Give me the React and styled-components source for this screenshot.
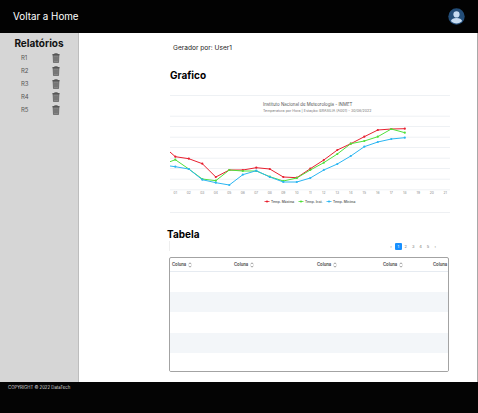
import React from 'react'
import styled, { createGlobalStyle } from 'styled-components'

const GlobalStyle = createGlobalStyle`
  html, body { margin: 0; padding: 0; background: #fff; }
  body { font-family: Inter, "Liberation Sans", sans-serif; color: #000; }
`

const Page = styled.div`
  width: 478px;
  height: 413px;
  display: flex;
  flex-direction: column;
  overflow: hidden;
`

const Header = styled.header`
  flex: 0 0 33px;
  background: #020202;
  color: #fff;
  display: flex;
  align-items: center;
  justify-content: space-between;
  padding: 0 13px;
  font-size: 9.8px;
`

const Body = styled.div`
  flex: 1;
  display: flex;
  min-height: 0;
`

const Sidebar = styled.aside`
  width: 79px;
  box-sizing: border-box;
  background: #d6d6d6;
  border-right: 1px solid #bdbdbd;
  padding-top: 4px;
`

const SideTitle = styled.h2`
  margin: 0 0 1px;
  font-size: 10px;
  line-height: 13px;
  font-weight: 700;
  text-align: center;
  color: #111;
`

const ReportRow = styled.div`
  display: flex;
  align-items: center;
  height: 13px;
  padding-left: 21px;
  font-size: 6px;
  color: #555;
`

const ReportName = styled.span`
  width: 31px;
`

const Main = styled.main`
  flex: 1;
  border-right: 1px solid #a8a8a8;
  display: flex;
  flex-direction: column;
  padding: 10px 0 0 91px;
`

const Author = styled.div`
  font-size: 6.6px;
  line-height: 10px;
  color: #222;
  padding-left: 3px;
`

const SectionTitle = styled.h3`
  margin: ${p => p.$top}px 0 0 ${p => p.$left}px;
  font-size: 10px;
  line-height: 14px;
  font-weight: 700;
  color: #000;
`

const ChartWrap = styled.div`
  margin-top: 13px;
  width: 280px;
  height: 118px;
`

const PagerRow = styled.div`
  display: flex;
  align-items: center;
  justify-content: flex-end;
  width: 280px;
  height: 10px;
  margin-left: -1px;
  box-sizing: border-box;
  padding-right: 10px;
  border-left: 1px solid #eee;
`

const PageItem = styled.span`
  width: 7.4px;
  height: 7px;
  border-radius: 1px;
  display: flex;
  align-items: center;
  justify-content: center;
  font-size: 4px;
  color: ${p => (p.$active ? '#fff' : '#777')};
  background: ${p => (p.$active ? '#1890ff' : 'transparent')};
`

const Table = styled.div`
  margin-top: 6px;
  margin-left: -1px;
  width: 280px;
  height: 115px;
  box-sizing: border-box;
  border: 1px solid #a3a3a3;
  border-radius: 2px;
  overflow: hidden;
`

const HeadRow = styled.div`
  display: grid;
  grid-template-columns: 62px 83px 66px 50px 1fr;
  height: 13px;
  align-items: center;
  padding-left: 2px;
  border-bottom: 1px solid #e6ebf1;
  font-size: 4.2px;
  font-weight: 600;
  color: #444;
`

const HeadCell = styled.div`
  display: flex;
  align-items: center;
  gap: 2px;
  white-space: nowrap;
`

const Row = styled.div`
  height: 20.2px;
  background: ${p => (p.$striped ? '#f3f6f9' : '#fff')};
`

const Footer = styled.footer`
  flex: 0 0 31px;
  box-sizing: border-box;
  background: #040404;
  color: #ddd;
  font-size: 4.3px;
  line-height: 6px;
  padding: 3px 0 0 8px;
`

const TrashIcon = () => (
  <svg width="8" height="10" viewBox="0 0 8 10">
    <path d="M2.700 1.200V.5h2.600v.7" fill="none" stroke="#444" strokeWidth=".6" />
    <rect x=".4" y="1.200" width="7.200" height="1.100" fill="#3c3c3c" />
    <path d="M1.100 2.300h5.800L6.500 9.600H1.500z" fill="#8a8a8a" stroke="#444" strokeWidth=".6" />
    <path d="M2.800 3.600v4.600M4 3.600v4.600M5.200 3.600v4.600" stroke="#555" strokeWidth=".5" />
  </svg>
)

const UserIcon = () => (
  <svg width="17" height="17" viewBox="0 0 17 17">
    <circle cx="8.500" cy="8.500" r="8.200" fill="#234d78" />
    <circle cx="8.500" cy="6.400" r="3.100" fill="#c7dcf2" />
    <path d="M2.900 13.100c.5-2.300 2.800-3.100 5.600-3.100s5.100.8 5.600 3.100c-1.300 1.500-3.400 2.500-5.600 2.500s-4.300-1-5.600-2.500z" fill="#c7dcf2" />
  </svg>
)

const SortIcon = () => (
  <svg width="4" height="6" viewBox="0 0 4 6">
    <path d="M.6 2.300 2 .8l1.400 1.500M.6 3.700 2 5.200l1.400-1.500" fill="none" stroke="#666" strokeWidth=".6" />
  </svg>
)

// chart values are in page pixels, offset by the chart's origin (170, 95)
const days = ['01', '02', '03', '04', '05', '06', '07', '08', '09', '10', '11', '12', '13', '14', '15', '16', '17', '18', '19', '20', '21']
const dayX = i => 5.3 + i * 13.5
const gridY = [0, 20.7, 31, 41.7, 52, 62.7, 73, 83.7, 94.3]

const series = [
  {
    name: 'Temp. Máxima',
    color: '#e8202f',
    values: [156.7, 158.7, 163.7, 177, 170, 170, 167.7, 169, 177, 177.7, 168.7, 160, 150, 143.7, 136.7, 130, 129, 128.7],
    start: 152,
    legendX: 94.5,
  },
  {
    name: 'Temp. Inst.',
    color: '#4fe03a',
    values: [159.7, 169, 179, 180.7, 170, 171, 171, 176.7, 181, 178, 170, 162.7, 154, 143.7, 141, 136.7, 129, 132.7],
    start: 161.7,
    legendX: 128.5,
  },
  {
    name: 'Temp. Mínima',
    color: '#2bb6f2',
    values: [166.7, 169, 179.7, 182.7, 185, 174.7, 170.7, 177, 182, 182, 178, 170, 164, 156, 146.7, 142, 139, 137.7],
    start: 166,
    legendX: 156.5,
  },
]

const Chart = () => (
  <svg width="280" height="118" viewBox="0 0 280 118" fontFamily="Inter, 'Liberation Sans', sans-serif">
    {gridY.map(y => (
      <line key={y} x1="0" x2="280" y1={y + 0.5} y2={y + 0.5} stroke="#eef1f4" strokeWidth="1" />
    ))}
    <line x1="0" x2="280" y1="117.5" y2="117.5" stroke="#eef0f3" />
    <text x="93" y="11" fontSize="4.4" fill="#555">Instituto Nacional de Meteorologia - INMET</text>
    <text x="93" y="16.500" fontSize="3.6" fill="#777">Temperatura por Hora | Estação: BRASILIA (A001) - 30/06/2022</text>
    {series.map(s => (
      <g key={s.name}>
        <polyline
          fill="none"
          stroke={s.color}
          strokeWidth="1"
          points={[`0,${s.start - 95}`, ...s.values.map((v, i) => `${dayX(i)},${v - 95}`)].join(' ')}
        />
        {s.values.map((v, i) => (
          <circle key={i} cx={dayX(i)} cy={v - 95} r="1.1" fill={s.color} />
        ))}
        <line x1={s.legendX} x2={s.legendX + 5} y1="106.5" y2="106.5" stroke={s.color} strokeWidth=".8" />
        <circle cx={s.legendX + 2.5} cy="106.5" r="1.100" fill={s.color} />
        <text x={s.legendX + 6.5} y="107.7" fontSize="3.3" fontWeight="600" fill="#666">{s.name}</text>
      </g>
    ))}
    {days.map((d, i) => (
      <text key={d} x={dayX(i)} y="99" textAnchor="middle" fontSize="3.3" fill="#888">{d}</text>
    ))}
  </svg>
)

const reports = ['R1', 'R2', 'R3', 'R4', 'R5']
const columns = [0, 1, 2, 3, 4]
const pages = ['‹', '1', '2', '3', '4', '5', '›']

export default function App() {
  return (
    <>
      <GlobalStyle />
      <Page>
        <Header>
          <span>Voltar a Home</span>
          <UserIcon />
        </Header>
        <Body>
          <Sidebar>
            <SideTitle>Relatórios</SideTitle>
            {reports.map(r => (
              <ReportRow key={r}>
                <ReportName>{r}</ReportName>
                <TrashIcon />
              </ReportRow>
            ))}
          </Sidebar>
          <Main>
            <Author>Gerador por: User1</Author>
            <SectionTitle $top={15} $left={0}>Grafico</SectionTitle>
            <ChartWrap>
              <Chart />
            </ChartWrap>
            <SectionTitle $top={14} $left={-3}>Tabela</SectionTitle>
            <PagerRow>
              {pages.map(p => (
                <PageItem key={p} $active={p === '1'}>{p}</PageItem>
              ))}
            </PagerRow>
            <Table>
              <HeadRow>
                {columns.map(c => (
                  <HeadCell key={c}>
                    Coluna
                    {c < 4 && <SortIcon />}
                  </HeadCell>
                ))}
              </HeadRow>
              <Row />
              <Row $striped />
              <Row />
              <Row $striped />
              <Row />
            </Table>
          </Main>
        </Body>
        <Footer>COPYRIGHT © 2022 DataTech</Footer>
      </Page>
    </>
  )
}
